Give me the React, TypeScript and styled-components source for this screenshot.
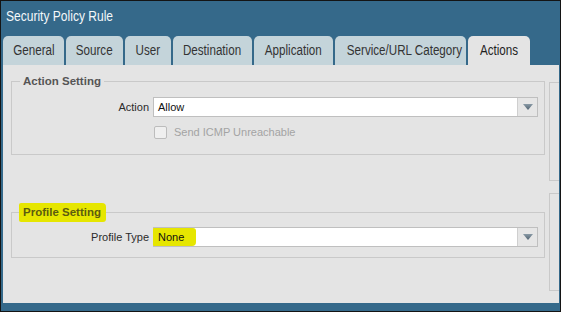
import React from 'react';
import styled, { createGlobalStyle } from 'styled-components';

const GlobalStyle = createGlobalStyle`
  html, body {
    margin: 0;
    padding: 0;
    background: #ffffff;
  }
  * {
    box-sizing: border-box;
  }
`;

const Frame = styled.div`
  width: 561px;
  height: 312px;
  border: 1px solid #141414;
  background: #35698a;
  padding: 0 1px 8px 2px;
  display: flex;
  flex-direction: column;
  overflow: hidden;
`;

// the header font is a narrow grotesque: Liberation Sans squeezed to Arial Narrow proportions
const Narrow = styled.span<{ $origin?: string }>`
  display: inline-block;
  font-family: 'Liberation Sans', Arial, sans-serif;
  transform: scaleX(0.83);
  transform-origin: ${p => p.$origin ?? 'center'};
  white-space: nowrap;
`;

const TitleBar = styled.div`
  height: 35px;
  padding: 7px 0 0 3px;
  font-size: 14.5px;
  line-height: 16px;
  color: #f4f8fa;
`;

const TabBar = styled.div`
  height: 29px;
  display: flex;
  align-items: flex-end;
  gap: 2px;
`;

const Tab = styled.div<{ $width: number; $active?: boolean }>`
  width: ${p => p.$width}px;
  height: 29px;
  border-radius: 5px 5px 0 0;
  background: ${p => (p.$active ? '#e4e4e4' : '#c4d4da')};
  color: ${p => (p.$active ? '#1e1e1e' : '#333333')};
  font-size: 14px;
  line-height: 29px;
  text-align: center;
  white-space: nowrap;
`;

const Content = styled.div`
  flex: 1;
  background: #e4e4e4;
  display: grid;
  grid-template-columns: 546px 1fr;
  overflow: hidden;
  font-family: 'Liberation Sans', Arial, sans-serif;
  font-size: 11px;
`;

const MainColumn = styled.div`
  padding: 10px 0 0 8px;
`;

const SideColumn = styled.div`
  padding-top: 17px;
  display: flex;
  flex-direction: column;
  gap: 12px;
`;

const SideBox = styled.div<{ $height: number }>`
  height: ${p => p.$height}px;
  border: 1px solid #c9c9c9;
  border-right: none;
`;

const Group = styled.fieldset<{ $top?: number; $padTop: number; $padBottom: number }>`
  width: 534px;
  margin: ${p => p.$top ?? 0}px 0 0 0;
  padding: ${p => p.$padTop}px 6px ${p => p.$padBottom}px 0;
  border: 1px solid #c9c9c9;
  min-inline-size: 0;
`;

const Legend = styled.legend<{ $marked?: boolean }>`
  margin-left: ${p => (p.$marked ? 7 : 8)}px;
  padding: ${p => (p.$marked ? '3px 5px 3px 4px' : '0 3px')};
  font-weight: bold;
  font-size: 11.5px;
  line-height: 13px;
  color: ${p => (p.$marked ? '#5c5c10' : '#555555')};
  background: ${p => (p.$marked ? '#e6e600' : 'transparent')};
  border-radius: ${p => (p.$marked ? '2px 4px 3px 2px' : '0')};
`;

const FormRow = styled.div<{ $gap?: number }>`
  display: grid;
  grid-template-columns: 137px 385px;
  column-gap: 4px;
  align-items: center;
  margin-top: ${p => p.$gap ?? 0}px;
`;

const Label = styled.span`
  text-align: right;
  color: #2b2b2b;
`;

const SelectBox = styled.div`
  height: 20px;
  border: 1px solid #bfbfbf;
  background: #ffffff;
  display: flex;
  align-items: stretch;
`;

const SelectValue = styled.span`
  flex: 1;
  padding-left: 4px;
  line-height: 18px;
  color: #111111;
`;

const Marked = styled.span`
  display: inline-block;
  margin: -1px 0 0 -5px;
  padding: 1px 12px 1px 5px;
  line-height: 16px;
  background: #e6e600;
  border-radius: 1px 3px 4px 1px;
`;

const DropButton = styled.div`
  width: 20px;
  border-left: 1px solid #cfcfcf;
  background: #e6e6e6;
  display: flex;
  align-items: center;
  justify-content: center;
`;

const CheckLine = styled.label`
  grid-column: 2;
  display: flex;
  align-items: center;
  gap: 7px;
  height: 14px;
  padding-left: 1px;
  color: #a3a3a3;
`;

const CheckSquare = styled.span`
  width: 13px;
  height: 13px;
  border: 1px solid #bcbcbc;
  border-radius: 2px;
  background: #efefef;
`;

const Caret = () => (
  <svg width="10" height="6" viewBox="0 0 10 6">
    <defs>
      <linearGradient id="caret" x1="0" y1="0" x2="0" y2="1">
        <stop offset="0" stopColor="#8a9aa6" />
        <stop offset="1" stopColor="#4f6170" />
      </linearGradient>
    </defs>
    <polygon points="0,0 10,0 5,6" fill="url(#caret)" />
  </svg>
);

const Select: React.FC<{ children: React.ReactNode }> = ({ children }) => (
  <SelectBox>
    <SelectValue>{children}</SelectValue>
    <DropButton>
      <Caret />
    </DropButton>
  </SelectBox>
);

const tabs = [
  { name: 'General', width: 61 },
  { name: 'Source', width: 57 },
  { name: 'User', width: 46 },
  { name: 'Destination', width: 79 },
  { name: 'Application', width: 79 },
  { name: 'Service/URL Category', width: 131 },
  { name: 'Actions', width: 62, active: true },
];

export default function App() {
  return (
    <>
      <GlobalStyle />
      <Frame>
        <TitleBar>
          <Narrow $origin="left">Security Policy Rule</Narrow>
        </TitleBar>
        <TabBar>
          {tabs.map(tab => (
            <Tab key={tab.name} $width={tab.width} $active={tab.active}>
              <Narrow>{tab.name}</Narrow>
            </Tab>
          ))}
        </TabBar>
        <Content>
          <MainColumn>
            <Group $padTop={9} $padBottom={15}>
              <Legend>Action Setting</Legend>
              <FormRow>
                <Label>Action</Label>
                <Select>Allow</Select>
              </FormRow>
              <FormRow $gap={8}>
                <CheckLine>
                  <CheckSquare />
                  Send ICMP Unreachable
                </CheckLine>
              </FormRow>
            </Group>
            <Group $top={48} $padTop={5} $padBottom={10}>
              <Legend $marked>Profile Setting</Legend>
              <FormRow>
                <Label>Profile Type</Label>
                <Select>
                  <Marked>None</Marked>
                </Select>
              </FormRow>
            </Group>
          </MainColumn>
          <SideColumn>
            <SideBox $height={99} />
            <SideBox $height={98} />
          </SideColumn>
        </Content>
      </Frame>
    </>
  );
}
